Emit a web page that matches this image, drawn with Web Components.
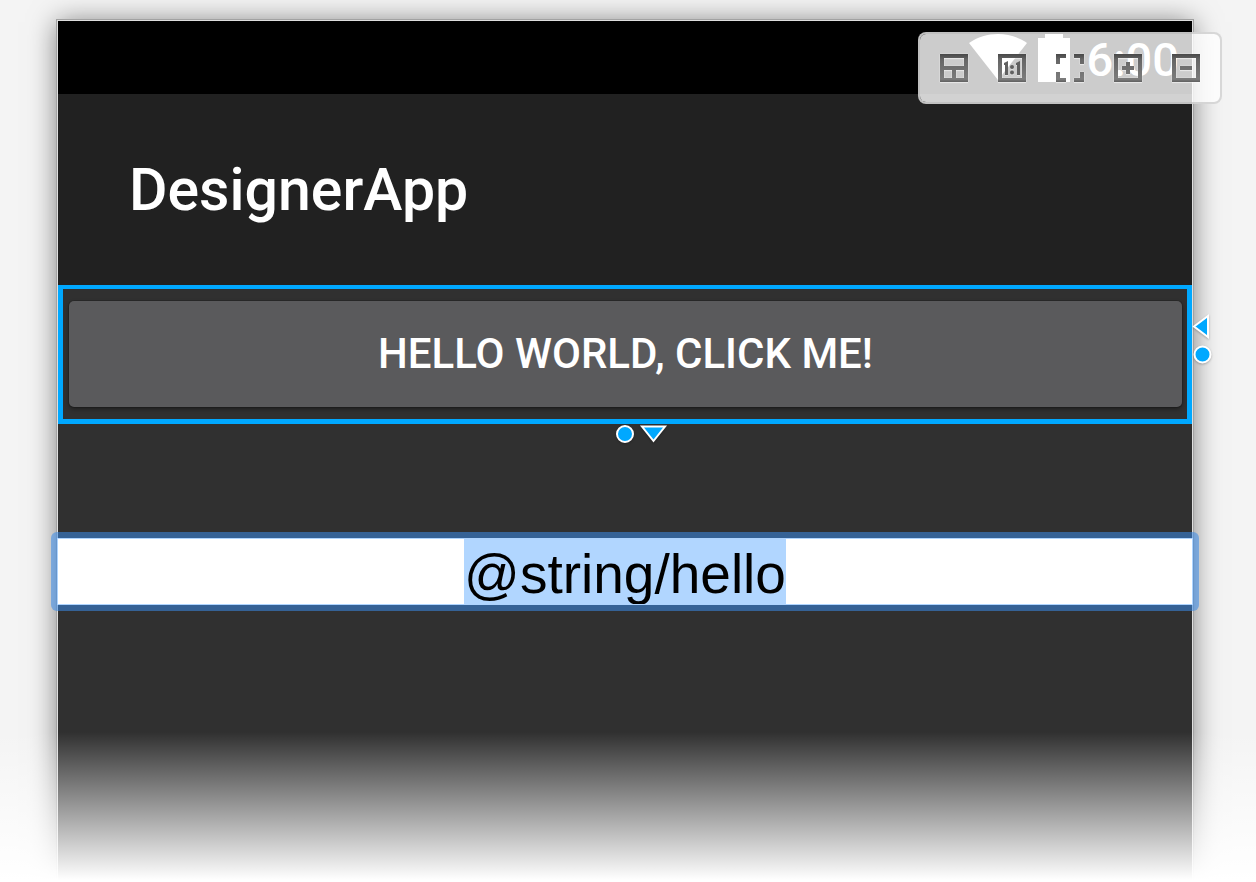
<!DOCTYPE html>
<html lang="en">
<head>
<meta charset="utf-8">
<meta name="viewport" content="width=device-width, initial-scale=1">
<title>DesignerApp – layout designer</title>
<style>
  html, body { margin: 0; height: 100%; }
  body { font-family: Roboto, "Liberation Sans", sans-serif; background: #f4f4f4; }
</style>
</head>
<body>
<design-surface>
  <device-frame>
    <status-bar time="6:00"></status-bar>
    <app-bar>DesignerApp</app-bar>
    <selected-widget><material-button>HELLO WORLD, CLICK ME!</material-button></selected-widget>
    <inline-editor label="Text" value="@string/hello"></inline-editor>
  </device-frame>
  <zoom-toolbar slot="toolbar"></zoom-toolbar>
</design-surface>

<script>
const define = (name, html, setup) => customElements.define(name, class extends HTMLElement {
  constructor() {
    super();
    const t = document.createElement('template');
    t.innerHTML = html;
    this.attachShadow({ mode: 'open' }).append(t.content.cloneNode(true));
  }
  connectedCallback() { if (setup) setup(this, this.shadowRoot); }
});

define('design-surface', `
  <style>
    :host { display: flex; flex-direction: column; position: relative; box-sizing: border-box;
      min-height: 100%; padding: 20px 63px 0 57px; overflow: hidden; background: #f4f4f4; }
    main { flex: 1; display: flex; flex-direction: column; }
    .fade { position: absolute; left: 0; right: 0; bottom: 0; height: 150px; pointer-events: none;
      background: linear-gradient(rgba(255,255,255,0), #fff 148px); }
    .tools { position: absolute; top: 32px; right: 34px; }
  </style>
  <main><slot></slot></main>
  <div class="fade"></div>
  <div class="tools"><slot name="toolbar"></slot></div>
`);

define('device-frame', `
  <style>
    :host { display: flex; flex-direction: column; flex: 1; background: #303030;
      border: 1px solid #dedede; border-bottom: 0;
      box-shadow: 0 0 0 1px #a2a2a2, 0 2px 26px rgba(0,0,0,.5); }
  </style>
  <slot></slot>
`);

define('status-bar', `
  <style>
    :host { display: flex; align-items: center; justify-content: flex-end; box-sizing: border-box;
      height: 73px; padding-right: 13px; background: #000; color: #fff; }
    svg { display: block; fill: #fff; }
    .wifi { margin-right: 10px; }
    time { margin-left: 16px; padding-top: 4px; font-size: 47px; line-height: 56px; font-weight: 500; }
  </style>
  <svg class="wifi" width="60" height="48" viewBox="0 0 60 48" role="img" aria-label="Wi-Fi"><path d="M1 9C18-3 42-3 59 9L30 46Z"/></svg>
  <svg width="32" height="48" viewBox="0 0 32 48" role="img" aria-label="Battery"><path d="M0 4H7V0H25V4H32V48H0Z"/></svg>
  <time></time>
`, (host, root) => { root.querySelector('time').textContent = host.getAttribute('time'); });

define('app-bar', `
  <style>
    :host { display: flex; align-items: center; box-sizing: border-box; height: 191px;
      padding: 0 71px; background: #212121; color: #fff; }
    h1 { margin: 0; font-size: 59px; line-height: 72px; font-weight: 500; }
  </style>
  <h1><slot></slot></h1>
`);

define('selected-widget', `
  <style>
    :host { display: block; position: relative; border: 5px solid #00a8ff; border-top-width: 4px;
      padding: 12px 5px 12px 6px; }
    svg { position: absolute; display: block; overflow: visible; fill: #00a8ff; stroke: #fff; stroke-width: 2;
      filter: drop-shadow(0 1px 1px rgba(0,0,0,.25)); }
    .side { left: calc(100% + 5px); top: 24px; }
    .below { top: calc(100% + 5px); left: calc(50% - 10px); }
  </style>
  <slot></slot>
  <svg class="side" width="18" height="52" viewBox="0 0 18 52" role="img" aria-label="Width handle">
    <path d="M2 13.500L16 3V24Z"/><circle cx="10.500" cy="41.500" r="8"/></svg>
  <svg class="below" width="54" height="20" viewBox="0 0 54 20" role="img" aria-label="Height handle">
    <circle cx="10" cy="10" r="8"/><path d="M27 2.500H50L38.500 17Z"/></svg>
`);

define('material-button', `
  <style>
    :host { display: block; }
    button { display: block; width: 100%; height: 106px; margin: 0; padding: 0; border: 0; border-radius: 5px;
      background: #5a5a5c; color: #fff; font: 500 42px/48px Roboto, sans-serif;
      box-shadow: 0 0 0 1px rgba(0,0,0,.12), 0 2px 4px rgba(0,0,0,.4); }
  </style>
  <button type="button"><slot></slot></button>
`);

define('inline-editor', `
  <style>
    :host { display: block; position: relative; margin: 108px -7px 0; border: 6px solid rgba(59,141,235,.55);
      border-radius: 6px; background: #fff; background-clip: padding-box; }
    input { display: block; box-sizing: border-box; width: 100%; height: 67px; margin: 0; padding: 4px 0 0;
      border: 1px solid #aed4ff; border-radius: 0; outline: 0; background: #fff; color: #000;
      text-align: center; font: 55px/72px "Liberation Sans", Arial, sans-serif; }
    input::selection { background: #b1d6ff; color: #000; }
  </style>
  <input type="text">
`, (host, root) => {
  const input = root.querySelector('input');
  input.setAttribute('aria-label', host.getAttribute('label'));
  input.value = host.getAttribute('value');
  input.focus({ preventScroll: true });
  input.select();
});

define('zoom-toolbar', `
  <style>
    :host { display: flex; gap: 30px; box-sizing: border-box; padding: 20px; border: 2px solid rgba(212,212,212,.9);
      border-radius: 8px; background: rgba(255,255,255,.8); background-clip: padding-box; }
    button { display: block; width: 28px; height: 28px; margin: 0; padding: 0; border: 0; background: none; }
    svg { display: block; overflow: visible; filter: drop-shadow(0 1px 0 rgba(255,255,255,.4)); }
    .ink { fill: url(#g); fill-rule: evenodd; stroke: rgba(255,255,255,.35); stroke-width: 1; paint-order: stroke; }
  </style>
  <button type="button" aria-label="Switch layout"><svg width="28" height="28" viewBox="0 0 28 28">
    <defs><linearGradient id="g" gradientUnits="userSpaceOnUse" x1="0" y1="0" x2="0" y2="28">
      <stop offset="0" stop-color="#484848"/><stop offset=".2" stop-color="#666"/><stop offset=".9" stop-color="#7c7c7c"/><stop offset="1" stop-color="#606060"/></linearGradient></defs>
    <path class="ink" d="M0 0H28V28H0ZM4 4V12H24V4ZM4 16V24H12V16ZM16 16V24H24V16Z"/></svg></button>
  <button type="button" aria-label="Actual size"><svg width="28" height="28" viewBox="0 0 28 28">
    <path class="ink" d="M0 0H28V28H0ZM4 4V24H24V4Z"/>
    <path fill="#606060" d="M6 9L10 7V21H7V11H6ZM18 9L22 7V21H19V11H18Z"/>
    <circle cx="14" cy="13" r="2" fill="#606060"/><circle cx="14" cy="18.500" r="2" fill="#606060"/></svg></button>
  <button type="button" aria-label="Zoom to fit"><svg width="28" height="28" viewBox="0 0 28 28">
    <path class="ink" d="M0 0H10V4H4V10H0ZM18 0H28V10H24V4H18ZM0 18H4V24H10V28H0ZM24 18H28V28H18V24H24Z"/></svg></button>
  <button type="button" aria-label="Zoom in"><svg width="28" height="28" viewBox="0 0 28 28">
    <path class="ink" d="M0 0H28V28H0ZM4 4V24H24V4ZM12 8H16V12H20V16H16V20H12V16H8V12H12Z"/></svg></button>
  <button type="button" aria-label="Zoom out"><svg width="28" height="28" viewBox="0 0 28 28">
    <path class="ink" d="M0 0H28V28H0ZM4 4V24H24V4ZM8 12H20V16H8Z"/></svg></button>
`);
</script>
</body>
</html>
